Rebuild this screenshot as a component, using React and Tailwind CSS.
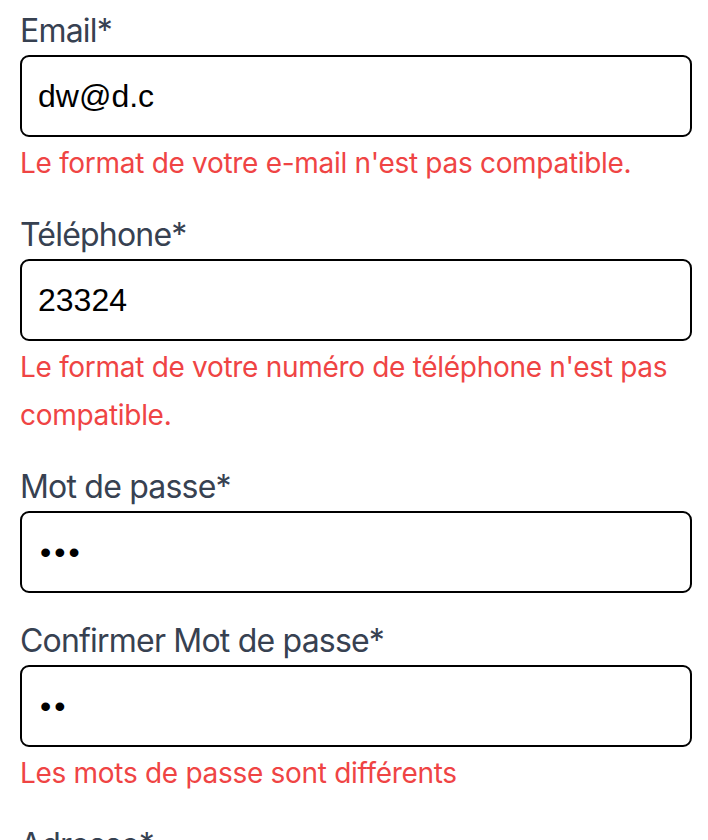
import { useState } from "react";

const fields = [
  {
    id: "email",
    label: "Email*",
    type: "text",
    value: "dw@d.c",
    error: "Le format de votre e-mail n'est pas compatible.",
  },
  {
    id: "phone",
    label: "Téléphone*",
    type: "text",
    value: "23324",
    error: "Le format de votre numéro de téléphone n'est pas compatible.",
  },
  {
    id: "password",
    label: "Mot de passe*",
    type: "password",
    value: "abc",
    error: null,
  },
  {
    id: "confirm",
    label: "Confirmer Mot de passe*",
    type: "password",
    value: "ab",
    error: "Les mots de passe sont différents",
  },
  {
    id: "address",
    label: "Adresse*",
    type: "text",
    value: "",
    error: null,
  },
];

const Field = ({ field }) => {
  const [value, setValue] = useState(field.value);
  const isPassword = field.type === "password";

  return (
    <div className="mb-6 flex flex-col">
      <label
        htmlFor={field.id}
        className="text-[32px] leading-[48px] tracking-[-0.8px] text-[#374151] font-['Inter',sans-serif]"
      >
        {field.label}
      </label>
      <input
        id={field.id}
        type={field.type}
        value={value}
        onChange={(e) => setValue(e.target.value)}
        className={
          isPassword
            ? "h-[82px] w-full rounded-[9px] border-2 border-black bg-white pl-[18px] pr-4 text-[32px] tracking-[3px] text-black font-['Liberation_Sans',Arial,sans-serif] focus:outline-none"
            : "h-[82px] w-full rounded-[9px] border-2 border-black bg-white px-4 text-[32px] text-black font-['Liberation_Sans',Arial,sans-serif] focus:outline-none"
        }
      />
      {field.error && (
        <p className="mt-[2px] text-[28px] leading-[48px] tracking-[-0.3px] text-[#ef4444] font-['Inter',sans-serif]">
          {field.error}
        </p>
      )}
    </div>
  );
};

export default function App() {
  return (
    <div className="min-h-screen bg-white pt-[7px] pl-[20px] pr-[16px]">
      <form onSubmit={(e) => e.preventDefault()}>
        {fields.map((field) => (
          <Field key={field.id} field={field} />
        ))}
      </form>
    </div>
  );
}
